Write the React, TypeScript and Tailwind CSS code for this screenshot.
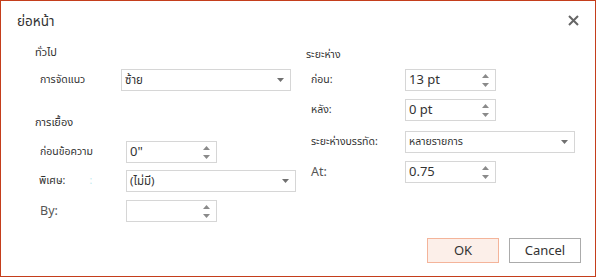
import React from 'react';

const font = { fontFamily: '"Segoe UI", "Noto Sans", "Noto Sans Thai", Tahoma, sans-serif' };

function Spin() {
  return (
    <div className="flex flex-col items-center gap-[5px] mr-[6px]">
      <svg width="7" height="4" viewBox="0 0 7 4"><path d="M0 4 L3.5 0 L7 4 Z" fill="#8a8a8a" /></svg>
      <svg width="7" height="4" viewBox="0 0 7 4"><path d="M0 0 L3.5 4 L7 0 Z" fill="#8a8a8a" /></svg>
    </div>
  );
}

function NumberBox({ value }: { value: string }) {
  return (
    <div className="w-[91px] h-[22px] border border-[#d6d6d6] flex items-center justify-between">
      <span className="pl-[3px] text-[13px] text-[#333]">{value}</span>
      <Spin />
    </div>
  );
}

function Dropdown({ value, small }: { value: string; small?: boolean }) {
  return (
    <div className="w-[170px] h-[22px] border border-[#d6d6d6] flex items-center justify-between">
      <span className={`pl-[3px] text-[#333] ${small ? 'text-[10.5px]' : 'text-[11.5px]'}`}>{value}</span>
      <svg width="7" height="4" viewBox="0 0 7 4" className="mr-[6px]"><path d="M0 0 L3.5 4 L7 0 Z" fill="#707070" /></svg>
    </div>
  );
}

function Row({ label, children, mt, labelW, latin }: { label: React.ReactNode; children: React.ReactNode; mt: string; labelW: string; latin?: boolean }) {
  return (
    <div className={`flex items-center ${mt}`}>
      <div className={`${labelW} ${latin ? 'text-[12.5px] text-[#555]' : 'text-[10.5px] text-[#333]'}`}>{label}</div>
      {children}
    </div>
  );
}

export default function App() {
  return (
    <div style={font} className="w-[596px] h-[277px] border border-[#c43e1c] bg-white flex flex-col">
      {/* Header */}
      <div className="h-[43px] flex items-center justify-between pl-[16px] pr-[16px]">
        <span className="text-[13.5px] text-[#333] -mt-[2px]">ย่อหน้า</span>
        <svg width="11" height="11" viewBox="0 0 11 11" className="-mt-[4px]">
          <path d="M1 1 L10 10 M10 1 L1 10" stroke="#666" strokeWidth="2" />
        </svg>
      </div>

      {/* Body */}
      <div className="flex flex-1">
        <div className="w-[305px] pl-[34px] flex flex-col">
          <div className="h-[14px] text-[11px] text-[#333] leading-[14px] mt-[1px]">ทั่วไป</div>
          <Row label="การจัดแนว" mt="mt-[10px]" labelW="w-[86px] pl-[5px]">
            <Dropdown value="ซ้าย" />
          </Row>
          <div className="h-[14px] text-[11px] text-[#333] leading-[14px] mt-[24px]">การเยื้อง</div>
          <Row label="ก่อนข้อความ" mt="mt-[12px]" labelW="w-[91px] pl-[5px]">
            <NumberBox value={'0"'} />
          </Row>
          <Row
            label={<span>พิเศษ:<span className="ml-[24px] text-[#bfe9ee]">:</span></span>}
            mt="mt-[7px]"
            labelW="w-[91px] pl-[4px]"
          >
            <Dropdown value="(ไม่มี)" />
          </Row>
          <Row label="By:" mt="mt-[8px]" labelW="w-[91px] pl-[5px]" latin>
            <NumberBox value="" />
          </Row>
        </div>

        <div className="flex flex-col">
          <div className="h-[14px] text-[10.5px] text-[#333] leading-[14px] mt-[3px]">ระยะห่าง</div>
          <Row label="ก่อน:" mt="mt-[8px]" labelW="w-[99px] pl-[5px]">
            <NumberBox value="13 pt" />
          </Row>
          <Row label="หลัง:" mt="mt-[8px]" labelW="w-[99px] pl-[5px]">
            <NumberBox value="0 pt" />
          </Row>
          <Row label="ระยะห่างบรรทัด:" mt="mt-[10px]" labelW="w-[99px] pl-[5px]">
            <Dropdown value="หลายรายการ" small />
          </Row>
          <Row label="At:" mt="mt-[8px]" labelW="w-[99px] pl-[5px]" latin>
            <NumberBox value="0.75" />
          </Row>
        </div>
      </div>

      {/* Footer */}
      <div className="flex justify-end gap-[10px] pr-[14px] pb-[13px]">
        <button className="w-[72px] h-[25px] border border-[#f4b49a] bg-[#fcefe9] text-[13px] text-[#333]">OK</button>
        <button className="w-[72px] h-[25px] border border-[#ababab] bg-white text-[13px] text-[#333]">Cancel</button>
      </div>
    </div>
  );
}
